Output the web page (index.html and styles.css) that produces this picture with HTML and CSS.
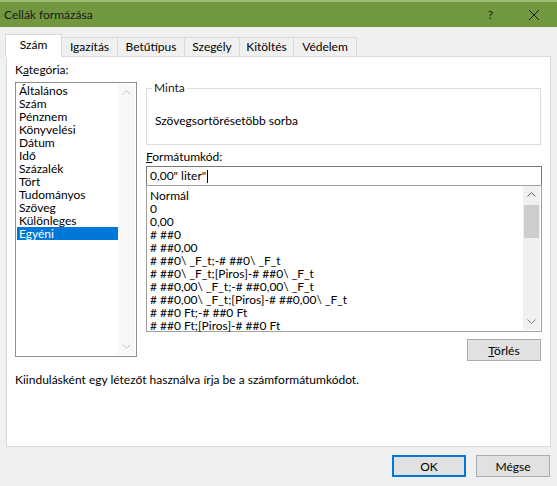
FILE: index.html
```html
<!DOCTYPE html>
<html lang="hu">
<head>
<meta charset="utf-8">
<title>Cellák formázása</title>
<link rel="stylesheet" href="styles.css">
</head>
<body>
<div class="dialog">
  <div class="titlebar">
    <span class="title">Cellák formázása</span>
    <span class="help">?</span>
    <svg class="close" width="12" height="12" viewBox="0 0 12 12"><path d="M1 1 L11 11 M11 1 L1 11" stroke="#1a1a1a" stroke-width="1" fill="none"/></svg>
  </div>

  <div class="tabs">
    <div class="tab active w1">Szám</div>
    <div class="tab w2">Igazítás</div>
    <div class="tab w3">Betűtípus</div>
    <div class="tab w4">Szegély</div>
    <div class="tab w5">Kitöltés</div>
    <div class="tab w6">Védelem</div>
  </div>

  <div class="panel">
    <div class="cols">
      <div class="cat-col">
        <div class="label">K<u>a</u>tegória:</div>
        <div class="listbox cat-list">
          <ul class="items">
            <li>Általános</li>
            <li>Szám</li>
            <li>Pénznem</li>
            <li>Könyvelési</li>
            <li>Dátum</li>
            <li>Idő</li>
            <li>Százalék</li>
            <li>Tört</li>
            <li>Tudományos</li>
            <li>Szöveg</li>
            <li>Különleges</li>
            <li class="selected">Egyéni</li>
          </ul>
          <div class="scrollbar disabled">
            <svg class="chev" width="9" height="5" viewBox="0 0 9 5"><path d="M0.5 4.5 L4.5 0.5 L8.5 4.5" stroke="#c3c3c3" fill="none"/></svg>
            <div class="track"></div>
            <svg class="chev" width="9" height="5" viewBox="0 0 9 5"><path d="M0.5 0.5 L4.5 4.5 L8.5 0.5" stroke="#c3c3c3" fill="none"/></svg>
          </div>
        </div>
      </div>

      <div class="right-col">
        <fieldset class="sample">
          <legend>Minta</legend>
          <div class="sample-text">Szövegsortörésetöbb sorba</div>
        </fieldset>
        <div class="label fmt-label"><u>F</u>ormátumkód:</div>
        <div class="input">0,00" liter"<span class="caret"></span></div>
        <div class="listbox fmt-list">
          <ul class="items">
            <li>Normál</li>
            <li>0</li>
            <li>0,00</li>
            <li># ##0</li>
            <li># ##0,00</li>
            <li># ##0\ _F_t;-# ##0\ _F_t</li>
            <li># ##0\ _F_t;[Piros]-# ##0\ _F_t</li>
            <li># ##0,00\ _F_t;-# ##0,00\ _F_t</li>
            <li># ##0,00\ _F_t;[Piros]-# ##0,00\ _F_t</li>
            <li># ##0 Ft;-# ##0 Ft</li>
            <li># ##0 Ft;[Piros]-# ##0 Ft</li>
          </ul>
          <div class="scrollbar">
            <svg class="chev" width="9" height="5" viewBox="0 0 9 5"><path d="M0.5 4.5 L4.5 0.5 L8.5 4.5" stroke="#606060" fill="none"/></svg>
            <div class="track"><div class="thumb"></div></div>
            <svg class="chev" width="9" height="5" viewBox="0 0 9 5"><path d="M0.5 0.5 L4.5 4.5 L8.5 0.5" stroke="#858585" fill="none"/></svg>
          </div>
        </div>
        <div class="btn-row">
          <button class="btn del"><u>T</u>örlés</button>
        </div>
      </div>
    </div>
    <p class="hint">Kiindulásként egy létezőt használva írja be a számformátumkódot.</p>
  </div>

  <div class="footer">
    <button class="btn ok">OK</button>
    <button class="btn">Mégse</button>
  </div>
</div>
</body>
</html>
```

FILE: styles.css
```css
html, body {
  margin: 0;
  padding: 0;
  background: #f0f0f0;
}

body {
  font-family: Lato, "Liberation Sans", sans-serif;
  font-size: 12px;
  color: #000;
}

.dialog {
  width: 557px;
  height: 486px;
  display: flex;
  flex-direction: column;
  overflow: hidden;
}

.titlebar {
  box-sizing: border-box;
  height: 27px;
  border-top: 2px solid #9dbb79;
  background: #71973f;
  display: flex;
  align-items: center;
  padding-left: 4px;
}

.title {
  flex: 1;
  color: #1a1a1a;
  font-size: 12px;
}

.help {
  color: #1a1a1a;
  font-size: 12px;
  margin-right: 35px;
}

.close {
  margin-right: 17px;
}

/* Tabs */
.tabs {
  display: flex;
  align-items: flex-end;
  margin: 7px 0 -1px 5px;
  position: relative;
  z-index: 1;
}

.tab {
  box-sizing: border-box;
  height: 20px;
  border: 1px solid #d9d9d9;
  background: #f0f0f0;
  text-align: center;
  line-height: 18px;
  margin-left: -1px;
}

.tab:first-child {
  margin-left: 0;
}

.tab.active {
  height: 23px;
  background: #fff;
  border-bottom-color: #fff;
  line-height: 20px;
}

.w1 { width: 57px; }
.w2 { width: 57px; }
.w3 { width: 68px; }
.w4 { width: 56px; }
.w5 { width: 55px; }
.w6 { width: 64px; }

/* Panel */
.panel {
  box-sizing: border-box;
  margin: 0 6px 0 6px;
  height: 391px;
  background: #fff;
  border: 1px solid #d9d9d9;
  padding: 5px 8px 0 8px;
}

.cols {
  display: flex;
  gap: 9px;
}

.label {
  line-height: 16px;
  height: 16px;
}

.cat-col {
  width: 122px;
  display: flex;
  flex-direction: column;
}

.listbox {
  box-sizing: border-box;
  border: 1px solid #8f8f8f;
  background: #fff;
  display: flex;
}

.cat-list {
  margin-top: 4px;
  height: 275px;
  padding: 1px 1px 1px 1px;
}

.items {
  list-style: none;
  margin: 0;
  padding: 0;
  flex: 1;
  min-width: 0;
}

.items li {
  line-height: 13px;
  height: 13px;
  padding-left: 2px;
  white-space: nowrap;
}

.items li.selected {
  background: #0078d7;
  color: #fff;
}

.scrollbar {
  width: 17px;
  background: #f0f0f0;
  display: flex;
  flex-direction: column;
  align-items: center;
}

.scrollbar.disabled {
  background: #f8f8f8;
}

.scrollbar .chev {
  flex: none;
  margin: 6px 0;
}

.track {
  flex: 1;
  width: 100%;
  display: flex;
  flex-direction: column;
  align-items: center;
}

.thumb {
  width: 15px;
  height: 33px;
  margin-top: 2px;
  background: #cdcdcd;
}

.right-col {
  width: 396px;
  display: flex;
  flex-direction: column;
}

.sample {
  box-sizing: border-box;
  margin: 19px 1px 0 0;
  padding: 0 0 0 8px;
  border: 1px solid #dcdcdc;
  height: 64px;
  min-width: 0;
}

.sample legend {
  padding: 0 2px;
  margin-left: -3px;
  line-height: 14px;
  color: #1a1a1a;
}

.sample-text {
  padding-top: 18px;
  line-height: 16px;
}

.fmt-label {
  margin-top: 4px;
}

.input {
  box-sizing: border-box;
  margin-top: 1px;
  height: 20px;
  border: 1px solid #7a7a7a;
  padding: 0 3px;
  line-height: 18px;
  display: flex;
  align-items: center;
}

.caret {
  display: inline-block;
  width: 1px;
  height: 13px;
  background: #000;
  margin-left: 1px;
}

.fmt-list {
  margin-top: -1px;
  height: 147px;
  border-color: #a0a0a0;
  padding: 0 1px 1px 1px;
}

.fmt-list .items {
  padding-top: 3px;
}

.fmt-list .items li {
  padding-left: 2px;
}

.btn-row {
  display: flex;
  justify-content: flex-end;
  margin-top: 7px;
}

.btn {
  box-sizing: border-box;
  width: 74px;
  height: 22px;
  background: #e1e1e1;
  border: 1px solid #adadad;
  font: inherit;
  color: #000;
  padding: 0;
  margin: 0;
}

.del {
  margin-right: 1px;
}

.hint {
  margin: 11px 0 0 0;
  line-height: 16px;
}

.footer {
  display: flex;
  justify-content: flex-end;
  gap: 10px;
  padding: 8px 7px 0 0;
}

.btn.ok {
  border: 2px solid #0078d7;
}
```
